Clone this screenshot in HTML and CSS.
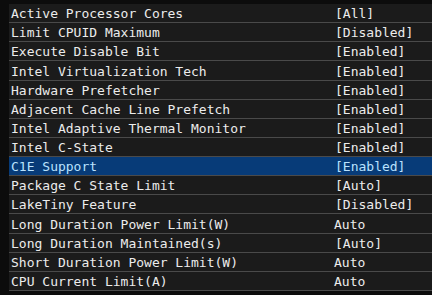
FILE: index.html
```html
<!DOCTYPE html>
<html lang="en">
  <head>
    <meta charset="UTF-8" />
    <meta name="viewport" content="width=device-width, initial-scale=1.0" />
    <title>Advanced CPU Configuration</title>
    <link rel="stylesheet" href="styles.css">
  </head>
  <body>
    <section id="cpuSettings">
      <ul class="setting-list">
        <li class="setting"><span class="name">Active Processor Cores</span><span class="value">[All]</span></li>
        <li class="setting"><span class="name">Limit CPUID Maximum</span><span class="value">[Disabled]</span></li>
        <li class="setting"><span class="name">Execute Disable Bit</span><span class="value">[Enabled]</span></li>
        <li class="setting"><span class="name">Intel Virtualization Tech</span><span class="value">[Enabled]</span></li>
        <li class="setting"><span class="name">Hardware Prefetcher</span><span class="value">[Enabled]</span></li>
        <li class="setting"><span class="name">Adjacent Cache Line Prefetch</span><span class="value">[Enabled]</span></li>
        <li class="setting"><span class="name">Intel Adaptive Thermal Monitor</span><span class="value">[Enabled]</span></li>
        <li class="setting"><span class="name">Intel C-State</span><span class="value">[Enabled]</span></li>
        <li class="setting selected"><span class="name">C1E Support</span><span class="value">[Enabled]</span></li>
        <li class="setting"><span class="name">Package C State Limit</span><span class="value">[Auto]</span></li>
        <li class="setting"><span class="name">LakeTiny Feature</span><span class="value">[Disabled]</span></li>
        <li class="setting"><span class="name">Long Duration Power Limit(W)</span><span class="value plain">Auto</span></li>
        <li class="setting"><span class="name">Long Duration Maintained(s)</span><span class="value">[Auto]</span></li>
        <li class="setting"><span class="name">Short Duration Power Limit(W)</span><span class="value plain">Auto</span></li>
        <li class="setting"><span class="name">CPU Current Limit(A)</span><span class="value plain">Auto</span></li>
      </ul>
    </section>
  </body>
</html>
```

FILE: styles.css
```css
html,
body {
  margin: 0;
  padding: 0;
  width: 100%;
  height: 100%;
  background: #0c0c0c;
  overflow: hidden;
}

/* CPU settings list */
#cpuSettings {
  padding: 4px 0 0 9px;
  font-family: "DejaVu Sans Mono", "Liberation Mono", monospace;
  font-size: 13px;
  color: #ececec;
}

#cpuSettings .setting-list {
  margin: 0;
  padding: 0;
  list-style: none;
}

#cpuSettings .setting {
  display: grid;
  grid-template-columns: 326px 1fr;
  align-items: end;
  height: 17.14px;
  padding-bottom: 1px;
  background: #1b1b1b;
  border-bottom: 1px solid #4a4a4a;
  line-height: 15px;
  white-space: nowrap;
  overflow: hidden;
}

#cpuSettings .setting .name {
  padding-left: 2px;
}

#cpuSettings .setting .value.plain {
  margin-left: -1px;
}

#cpuSettings .setting.selected {
  background: #073b78;
  color: #b9e2ff;
}
```
